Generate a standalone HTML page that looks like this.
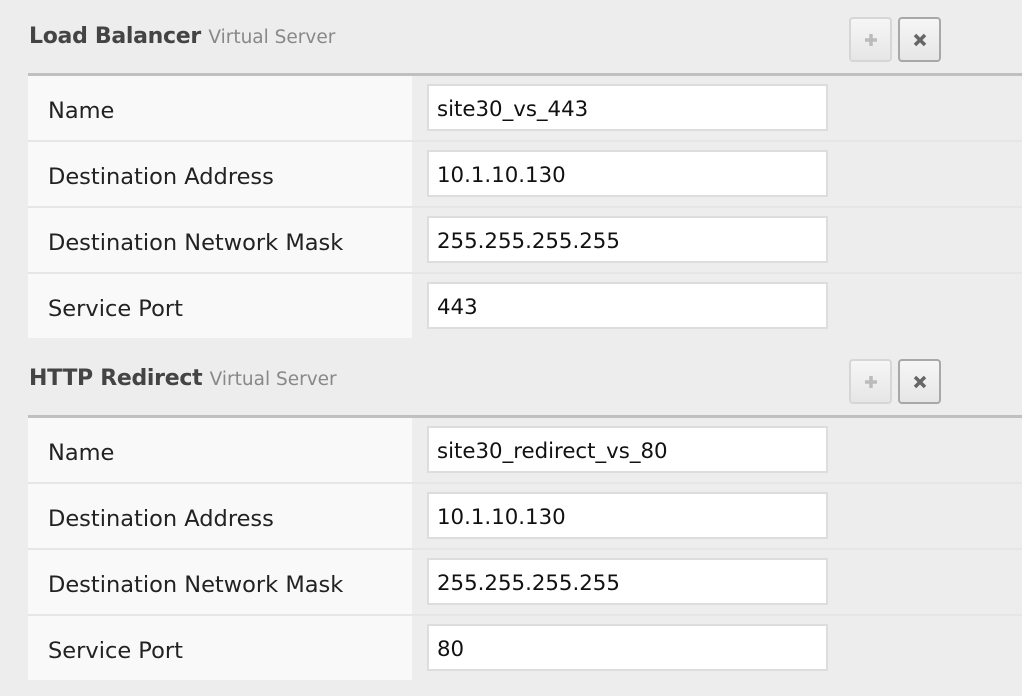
<!DOCTYPE html>
<html><head><meta charset="utf-8"><style>
*{margin:0;padding:0;box-sizing:border-box}
body{width:1022px;height:696px;background:#ededed;font-family:"DejaVu Sans","Liberation Sans",sans-serif;position:relative;overflow:hidden}
.sec{position:absolute;left:0;width:1022px;height:342px}
.title{position:absolute;left:29px;top:24px;font-size:22px;font-weight:bold;color:#444;white-space:nowrap;letter-spacing:-0.3px}
.title span{font-weight:normal;font-size:18.5px;color:#888;letter-spacing:0}
.btn{position:absolute;top:17px;width:43px;height:45px;border:2px solid #c8c8c8;border-radius:4px;background:linear-gradient(#f6f6f6,#e6e6e6)}
.btn.x{left:898px;border-color:#a8a8a8}
.btn.p{left:849px;border-color:#d6d6d6}
.btn svg{position:absolute;left:12px;top:13px}
.line{position:absolute;left:28px;top:73px;width:994px;height:3px;background:#c0c0c0}
.row{position:absolute;left:28px;width:994px;height:66px;border-bottom:2px solid #e6e6e6}
.lab{position:absolute;left:0;top:0;width:384px;height:64px;background:#f9f9f9;font-size:22.5px;color:#222;padding-left:20px;line-height:70px}
.inp{position:absolute;left:399px;top:8px;width:401px;height:47px;background:#fff;border:2px solid #ddd;font-size:21.3px;color:#111;padding-left:8px;line-height:47px}
</style></head><body>

<div class="sec" style="top:0">
<div class="title">Load Balancer <span>Virtual Server</span></div>
<div class="btn p"><svg width="16" height="16"><path d="M8 2v12M2 8h12" stroke="#bbb" stroke-width="3.5"/></svg></div>
<div class="btn x"><svg width="16" height="16"><path d="M3 3l10 10M13 3L3 13" stroke="#666" stroke-width="3.5"/></svg></div>
<div class="line"></div>
<div class="row" style="top:76px"><div class="lab">Name</div><div class="inp">site30_vs_443</div></div>
<div class="row" style="top:142px"><div class="lab">Destination Address</div><div class="inp">10.1.10.130</div></div>
<div class="row" style="top:208px"><div class="lab">Destination Network Mask</div><div class="inp">255.255.255.255</div></div>
<div class="row" style="top:274px;border-bottom:none"><div class="lab">Service Port</div><div class="inp">443</div></div>
</div>

<div class="sec" style="top:342px">
<div class="title">HTTP Redirect <span>Virtual Server</span></div>
<div class="btn p"><svg width="16" height="16"><path d="M8 2v12M2 8h12" stroke="#bbb" stroke-width="3.5"/></svg></div>
<div class="btn x"><svg width="16" height="16"><path d="M3 3l10 10M13 3L3 13" stroke="#666" stroke-width="3.5"/></svg></div>
<div class="line"></div>
<div class="row" style="top:76px"><div class="lab">Name</div><div class="inp">site30_redirect_vs_80</div></div>
<div class="row" style="top:142px"><div class="lab">Destination Address</div><div class="inp">10.1.10.130</div></div>
<div class="row" style="top:208px"><div class="lab">Destination Network Mask</div><div class="inp">255.255.255.255</div></div>
<div class="row" style="top:274px;border-bottom:none"><div class="lab">Service Port</div><div class="inp">80</div></div>
</div>

</body></html>
